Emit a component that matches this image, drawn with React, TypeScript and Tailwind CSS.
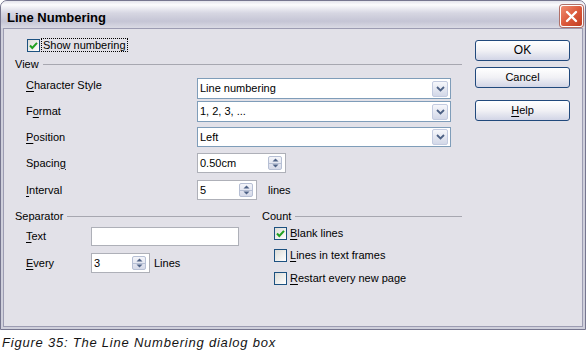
import React from "react";

const U = ({ children }: { children: React.ReactNode }) => (
  <span className="underline underline-offset-[2px]">{children}</span>
);

const Check = () => (
  <svg width="11" height="11" viewBox="0 0 11 11">
    <path d="M2 5.5 L4.3 8 L9 2.8" stroke="#21a121" strokeWidth="2" fill="none" />
  </svg>
);

function CheckBox({ checked }: { checked?: boolean }) {
  return (
    <div className="flex h-[13px] w-[13px] shrink-0 items-center justify-center border border-[#1c5180] bg-gradient-to-br from-[#dcdcd7] to-white">
      {checked && <Check />}
    </div>
  );
}

function Dropdown({ value }: { value: string }) {
  return (
    <div className="flex h-full w-[254px] items-center border border-[#7f9db9] bg-white pl-[2px] pr-[2px]">
      <span className="flex-1">{value}</span>
      <div className="flex h-[16px] w-[16px] items-center justify-center rounded-[2px] border border-[#c3cbe0] bg-gradient-to-b from-[#f6f7fb] to-[#d3d8e8]">
        <svg width="9" height="6" viewBox="0 0 9 6">
          <path d="M1 1 L4.5 4.5 L8 1" stroke="#4d6185" strokeWidth="1.8" fill="none" />
        </svg>
      </div>
    </div>
  );
}

const SpinArrows = () => (
  <div className="flex h-[14px] w-[14px] flex-col rounded-[2px] border border-[#b6bfd4] bg-gradient-to-b from-[#f4f5fa] to-[#d5d9e8]">
    <div className="flex flex-1 items-center justify-center border-b border-[#b6bfd4]">
      <svg width="7" height="4" viewBox="0 0 7 4">
        <path d="M0.5 3.5 L3.5 0.5 L6.5 3.5 Z" fill="#4d6185" />
      </svg>
    </div>
    <div className="flex flex-1 items-center justify-center">
      <svg width="7" height="4" viewBox="0 0 7 4">
        <path d="M0.5 0.5 L3.5 3.5 L6.5 0.5 Z" fill="#4d6185" />
      </svg>
    </div>
  </div>
);

function Spin({ value, className }: { value: string; className: string }) {
  return (
    <div className={`flex h-full items-center border border-[#aeb0b8] bg-white pl-[2px] pr-[3px] ${className}`}>
      <span className="flex-1">{value}</span>
      <SpinArrows />
    </div>
  );
}

function Header({ label }: { label: string }) {
  return (
    <div className="flex h-[13px] items-center">
      <span>{label}</span>
      <div className="ml-[4px] h-0 flex-1 border-t border-[#a7a7b0]" />
    </div>
  );
}

function XpButton({ children, className }: { children: React.ReactNode; className?: string }) {
  return (
    <div
      className={`flex h-[21px] w-[95px] items-center justify-center rounded-[3px] border border-[#21497c] bg-gradient-to-b from-white via-[#f1f1f5] to-[#d2d5e6] ${className ?? ""}`}
    >
      {children}
    </div>
  );
}

export default function App() {
  return (
    <div className="h-[356px] w-[587px] bg-white font-['Liberation_Sans',Arial,sans-serif] text-[11px] leading-[13px] text-black">
      <div className="w-[586px] rounded-t-[7px] border border-[#76768f] bg-[#cfcfdb]">
        {/* title bar */}
        <div className="flex h-[27px] items-start justify-between rounded-t-[6px] bg-[linear-gradient(to_bottom,#e4e4ec_0%,#fbfbfd_14%,#d6d6e2_45%,#c5c5d5_75%,#dadae4_100%)] pl-[6px] pr-[2px]">
          <span className="pt-[9px] text-[13px] font-bold leading-[15px] text-black">Line Numbering</span>
          <div className="mt-[4px] flex h-[22px] w-[23px] items-center justify-center rounded-[3px] border border-white bg-gradient-to-br from-[#ee8d72] via-[#dc5a3c] to-[#c23d22] shadow-[0_0_0_1px_#b07068]">
            <svg width="13" height="13" viewBox="0 0 13 13">
              <path d="M2 2 L11 11 M11 2 L2 11" stroke="white" strokeWidth="2.4" strokeLinecap="round" />
            </svg>
          </div>
        </div>

        {/* body */}
        <div className="px-[2px] pb-[2px]">
          <div className="flex h-[299px] border border-[#9c9cb2] bg-[#e2e1e8]">
            {/* left column */}
            <div className="flex w-[458px] flex-col pl-[11px]">
              <div className="ml-[12px] mt-[9px] flex h-[14px] items-center">
                <CheckBox checked />
                <span className="ml-[1px] border border-dotted border-black px-[1px] leading-[12px]">Show numbering</span>
              </div>

              <div className="mt-[6px]">
                <Header label="View" />
              </div>

              <div className="mt-[7px] flex h-[21px]">
                <span className="w-[182px] pl-[11px] pt-[1px]">
                  <U>C</U>haracter Style
                </span>
                <Dropdown value="Line numbering" />
              </div>
              <div className="mt-[2px] flex h-[21px] items-center">
                <span className="w-[182px] pl-[11px]">
                  F<U>o</U>rmat
                </span>
                <Dropdown value="1, 2, 3, ..." />
              </div>
              <div className="mt-[5px] flex h-[20px] items-center">
                <span className="w-[182px] pl-[11px]">
                  <U>P</U>osition
                </span>
                <Dropdown value="Left" />
              </div>
              <div className="mt-[6px] flex h-[20px] items-center">
                <span className="w-[182px] pl-[11px]">
                  Spacin<U>g</U>
                </span>
                <Spin value="0.50cm" className="w-[89px]" />
              </div>
              <div className="mt-[7px] flex h-[20px] items-center">
                <span className="w-[182px] pl-[11px]">
                  <U>I</U>nterval
                </span>
                <Spin value="5" className="w-[60px]" />
                <span className="ml-[11px]">lines</span>
              </div>

              <div className="mt-[10px] flex">
                {/* separator */}
                <div className="flex w-[235px] flex-col">
                  <Header label="Separator" />
                  <div className="mt-[4px] flex h-[19px] items-center">
                    <span className="w-[76px] pl-[11px]">
                      <U>T</U>ext
                    </span>
                    <div className="h-full w-[148px] border border-[#aeb0b8] bg-white" />
                  </div>
                  <div className="mt-[7px] flex h-[20px] items-center">
                    <span className="w-[76px] pl-[11px]">
                      <U>E</U>very
                    </span>
                    <Spin value="3" className="w-[59px]" />
                    <span className="ml-[4px]">Lines</span>
                  </div>
                </div>

                {/* count */}
                <div className="ml-[12px] flex flex-1 flex-col">
                  <Header label="Count" />
                  <div className="ml-[12px] mt-[4px] flex h-[13px] items-center">
                    <CheckBox checked />
                    <span className="ml-[3px]">
                      <U>B</U>lank lines
                    </span>
                  </div>
                  <div className="ml-[12px] mt-[9px] flex h-[13px] items-center">
                    <CheckBox />
                    <span className="ml-[3px]">
                      <U>L</U>ines in text frames
                    </span>
                  </div>
                  <div className="ml-[12px] mt-[10px] flex h-[13px] items-center">
                    <CheckBox />
                    <span className="ml-[3px]">
                      <U>R</U>estart every new page
                    </span>
                  </div>
                </div>
              </div>
            </div>

            {/* buttons */}
            <div className="ml-[13px] flex flex-col pt-[11px]">
              <XpButton className="text-[12px]">OK</XpButton>
              <XpButton className="mt-[6px]">Cancel</XpButton>
              <XpButton className="mt-[12px]">
                <U>H</U>elp
              </XpButton>
            </div>
          </div>
        </div>
      </div>

      <div className="pl-[2px] pt-[5px] text-[13px] italic leading-[15px] tracking-[0.06em] text-[#141414]">
        Figure 35: The Line Numbering dialog box
      </div>
    </div>
  );
}
